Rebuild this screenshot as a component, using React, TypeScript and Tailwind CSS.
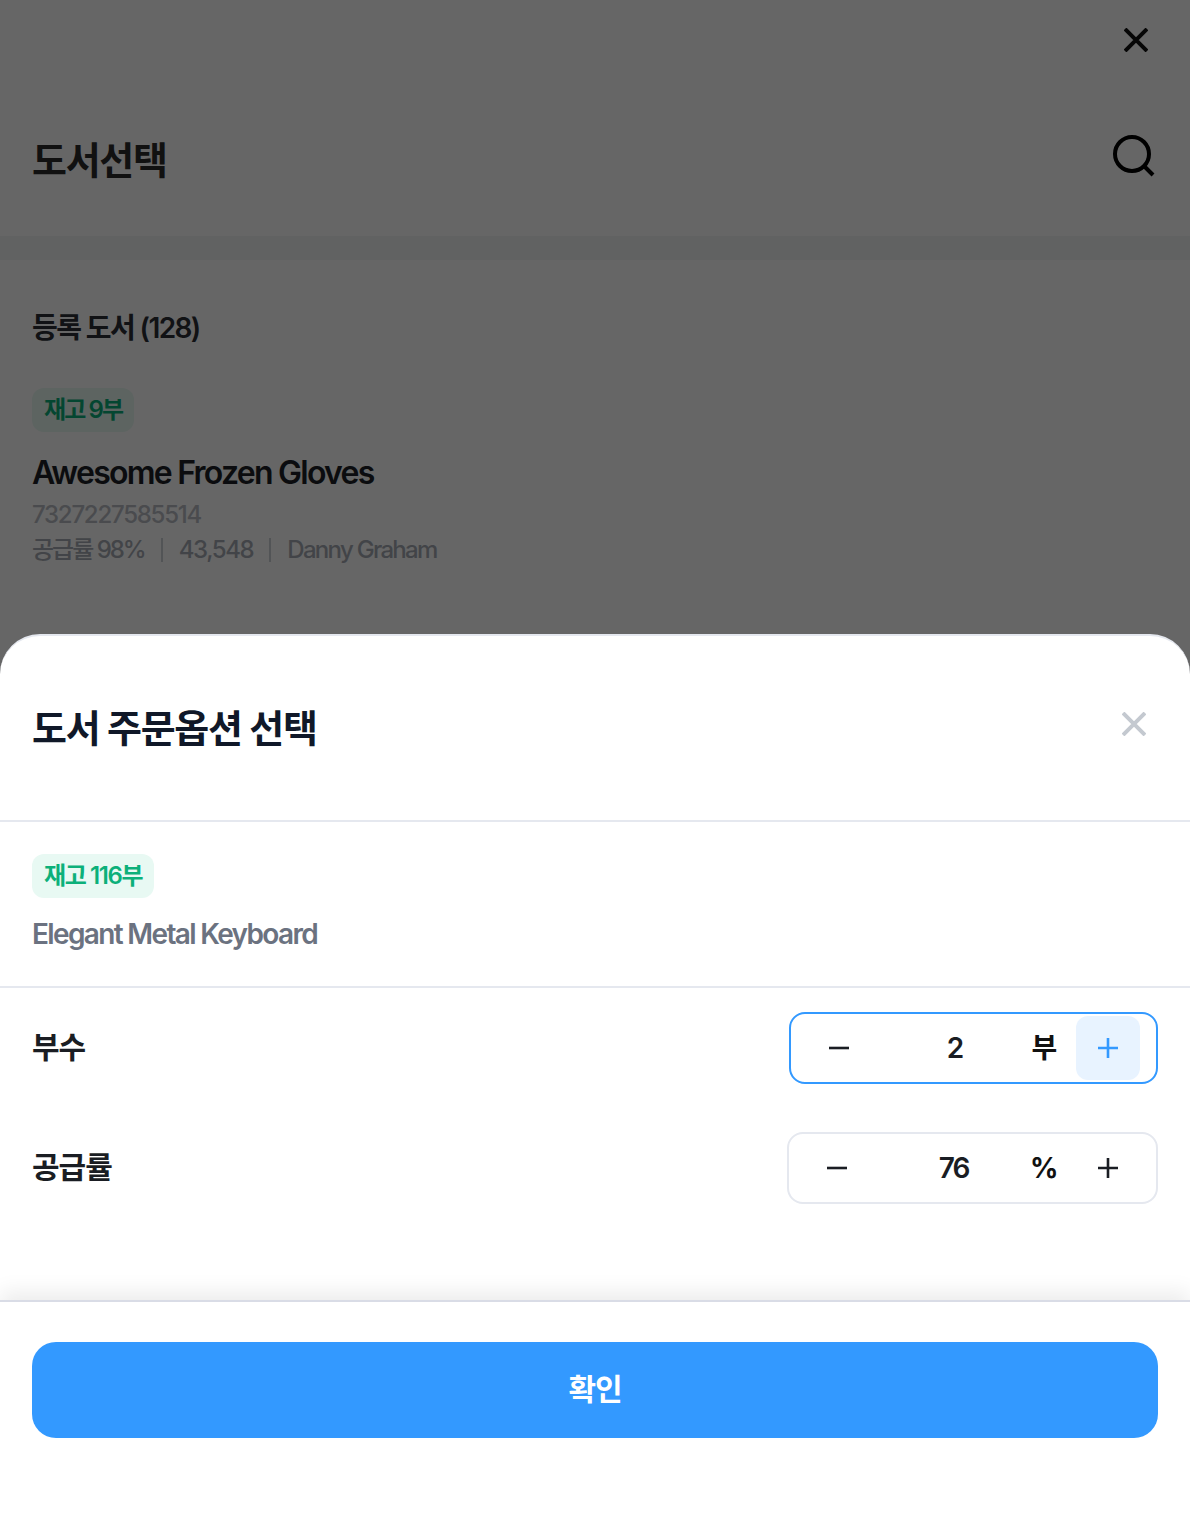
// App.tsx
// Book selection page dimmed behind the order options bottom sheet

const FONT = 'font-[Inter,"Noto_Sans_CJK_KR",sans-serif]';

function CloseIcon({ className = '' }: { className?: string }) {
  return (
    <svg className={className} viewBox="0 0 24 24" fill="none" stroke="currentColor" strokeWidth="4">
      <path d="M1 1L23 23M23 1L1 23" />
    </svg>
  );
}

function SearchIcon() {
  return (
    <svg className="w-11 h-11" viewBox="0 0 44 44" fill="none" stroke="currentColor" strokeWidth="4">
      <circle cx="20" cy="19" r="17" />
      <path d="M32 31L41 40" />
    </svg>
  );
}

function Stepper({
  value,
  unit,
  active = false,
  className = '',
}: {
  value: string;
  unit: string;
  active?: boolean;
  className?: string;
}) {
  return (
    <div
      className={`flex items-center h-[72px] px-4 border-2 rounded-2xl ${
        active ? 'border-[#3399ff]' : 'border-[#e5e8ef]'
      } ${className}`}
    >
      <button className="flex items-center justify-center w-16 h-16 text-[#1a1d23]">
        <svg className="w-5 h-5" viewBox="0 0 20 20" stroke="currentColor" strokeWidth="2.6">
          <path d="M0 10H20" />
        </svg>
      </button>
      <span className="flex-1 pl-[6px] text-center text-[28px] font-semibold text-[#1a1d23] tracking-[-2px]">
        {value}
      </span>
      <span className="flex justify-center w-6 mr-5 text-[28px] font-bold text-[#111111] tracking-[-0.5px] whitespace-nowrap">
        {unit}
      </span>
      <button
        className={`flex items-center justify-center w-16 h-16 rounded-xl ${
          active ? 'bg-[#e8f3ff] text-[#3399ff]' : 'text-[#1a1d23]'
        }`}
      >
        <svg className="w-5 h-5" viewBox="0 0 20 20" stroke="currentColor" strokeWidth="2.6">
          <path d="M0 10H20M10 0V20" />
        </svg>
      </button>
    </div>
  );
}

function StockBadge({ children, className = '' }: { children: string; className?: string }) {
  return (
    <span
      className={`inline-flex items-center h-11 px-3 rounded-xl bg-[#e8f9f3] text-[24px] font-semibold text-[#0cb07a] ${className}`}
    >
      {children}
    </span>
  );
}

function BookPage() {
  return (
    <div className="flex flex-col">
      <div className="flex justify-end h-20 pr-[42px] pt-[28px] text-[#111111]">
        <CloseIcon className="w-6 h-6" />
      </div>
      <div className="flex items-center justify-between h-[156px] pb-[2px] pl-8 pr-[34px]">
        <h1 className="pt-[6px] text-[38px] font-bold tracking-[-1.3px] text-[#2c2c2c]">도서선택</h1>
        <SearchIcon />
      </div>
      <div className="h-6 bg-[#f2f5f4]" />
      <div className="px-8 pt-[48px]">
        <h2 className="h-10 leading-[40px] text-[28px] font-semibold tracking-[-1.6px] text-[#2b2f36]">
          등록 도서 (128)
        </h2>
        <StockBadge className="mt-10 tracking-[-1.9px]">재고 9부</StockBadge>
        <p className="mt-4 h-12 leading-[50px] text-[32px] font-semibold tracking-[-1.75px] text-[#1c1f26]">
          Awesome Frozen Gloves
        </p>
        <p className="h-[36px] leading-[35px] mt-[1px] text-[24px] font-medium tracking-[-1.25px] text-[#b8bcc4]">
          7327227585514
        </p>
        <div className="flex items-center h-[34px] text-[24px] font-medium text-[#a6abb3]">
          <span className="tracking-[-2px]">공급률 98%</span>
          <span className="w-[2px] h-6 mx-4 bg-[#cdd1d8]" />
          <span className="tracking-[-1.4px]">43,548</span>
          <span className="w-[2px] h-6 mx-4 bg-[#cdd1d8]" />
          <span className="tracking-[-1.7px]">Danny Graham</span>
        </div>
      </div>
    </div>
  );
}

function OptionSheet() {
  return (
    <div className="absolute inset-x-0 bottom-0 flex flex-col h-[884px] bg-white border-t-2 border-[#e5e8ef] rounded-t-[40px]">
      <div className="flex items-center justify-between h-[186px] pl-8 pr-[44px] border-b-2 border-[#e5e8ef]">
        <h2 className="text-[38px] font-bold tracking-[-1.3px] text-[#101828]">도서 주문옵션 선택</h2>
        <CloseIcon className="w-6 h-6 mb-[8px] text-[#c4c9d0]" />
      </div>
      <div className="h-[166px] px-8 pt-8 border-b-2 border-[#e5e8ef]">
        <StockBadge className="tracking-[-1.4px]">재고 116부</StockBadge>
        <p className="mt-[14px] text-[28px] leading-[44px] font-semibold tracking-[-1.65px] text-[#6b7280]">
          Elegant Metal Keyboard
        </p>
      </div>
      <div className="flex-1 flex flex-col gap-12 pt-6 pl-8 pr-8">
        <div className="flex items-center justify-between">
          <span className="pb-[2px] text-[30px] font-semibold tracking-[-1px] text-[#1a1d23]">부수</span>
          <Stepper value="2" unit="부" active className="w-[369px]" />
        </div>
        <div className="flex items-center justify-between">
          <span className="pb-[2px] text-[30px] font-semibold tracking-[-1px] text-[#1a1d23]">공급률</span>
          <Stepper value="76" unit="%" className="w-[371px]" />
        </div>
      </div>
      <div className="h-[218px] px-8 pt-10 border-t-2 border-[#d9dce6] shadow-[0_-8px_20px_rgba(0,0,0,0.08)]">
        <button className="w-full h-24 pb-[2px] rounded-3xl bg-[#3399ff] text-[30px] font-semibold tracking-[-1px] text-white">
          확인
        </button>
      </div>
    </div>
  );
}

export default function App() {
  return (
    <div className={`relative h-[1518px] overflow-hidden bg-white ${FONT}`}>
      <BookPage />
      {/* dim layer over the page */}
      <div className="absolute inset-0 bg-black/60" />
      <OptionSheet />
    </div>
  );
}
